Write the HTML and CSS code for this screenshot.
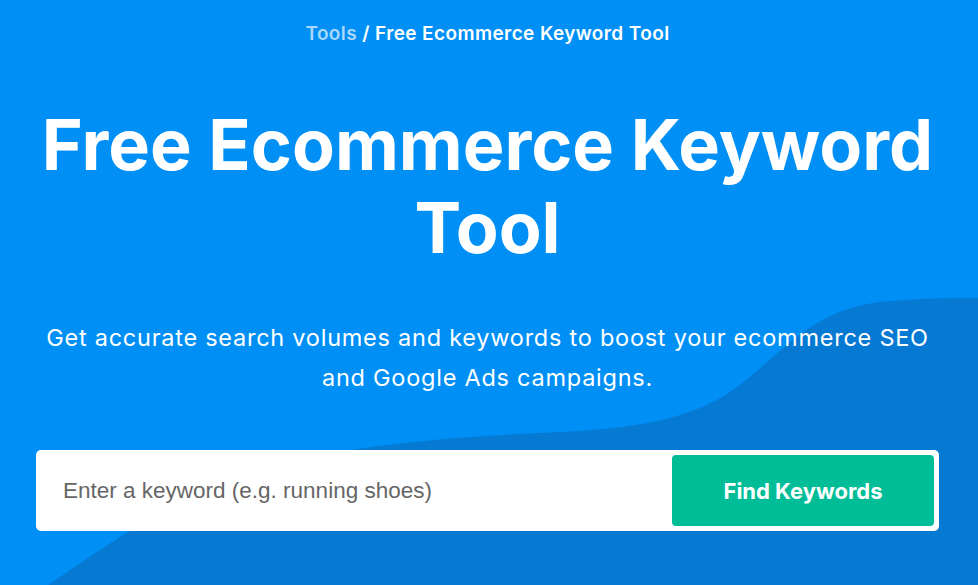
FILE: index.html
```html
<!DOCTYPE html>
<html lang="en">
<head>
<meta charset="utf-8">
<title>Free Ecommerce Keyword Tool</title>
<link rel="stylesheet" href="styles.css">
</head>
<body>
<section class="hero">
  <svg class="wave" viewBox="0 0 978 585" preserveAspectRatio="none" aria-hidden="true">
    <path d="M48 585 C 115 540, 195 480, 305 458 C 385 442, 470 436, 560 432 C 650 428, 700 415, 740 385 C 790 345, 815 310, 880 302 C 920 298, 950 298, 978 298 L 978 585 Z" fill="#0679d3"/>
  </svg>
  <div class="content">
    <nav class="crumbs"><a class="crumb-link" href="#">Tools</a> / Free Ecommerce Keyword Tool</nav>
    <h1 class="title">Free Ecommerce Keyword Tool</h1>
    <p class="lead">Get accurate search volumes and keywords to boost your ecommerce SEO and Google Ads campaigns.</p>
    <form class="search">
      <input class="search-input" type="text" placeholder="Enter a keyword (e.g. running shoes)">
      <button class="search-btn" type="button">Find Keywords</button>
    </form>
  </div>
</section>
</body>
</html>
```

FILE: styles.css
```css
* { box-sizing: border-box; }
html, body { margin: 0; padding: 0; }
body {
  font-family: Inter, "Noto Sans", sans-serif;
  background: #008ff5;
}
.hero {
  position: relative;
  width: 100%;
  height: 585px;
  background: #008ff5;
  overflow: hidden;
}
.wave {
  position: absolute;
  left: 0;
  top: 0;
  width: 100%;
  height: 100%;
}
.content {
  position: relative;
  display: flex;
  flex-direction: column;
  align-items: center;
  padding: 22px 39px 0 36px;
  color: #fff;
}
.crumbs {
  font-size: 19px;
  line-height: 24px;
  font-weight: 600;
  letter-spacing: 0.4px;
  color: #fff;
}
.crumb-link {
  color: #a9d8fc;
  text-decoration: none;
}
.title {
  margin: 57px 0 0 0;
  font-size: 70px;
  line-height: 83px;
  font-weight: 700;
  text-align: center;
  letter-spacing: 0px;
  width: 940px;
  flex-shrink: 0;
}
.lead {
  margin: 49px 0 0 0;
  font-size: 23.5px;
  line-height: 40px;
  font-weight: 400;
  letter-spacing: 0.75px;
  text-align: center;
  width: 100%;
}
.search {
  margin-top: 52px;
  width: 903px;
  height: 81px;
  background: #fff;
  border-radius: 5px;
  display: flex;
  align-items: stretch;
  padding: 5px 5px 5px 0;
}
.search-input {
  flex: 1;
  border: none;
  outline: none;
  background: transparent;
  padding: 0 0 0 27px;
  font-family: "Liberation Sans", Arial, sans-serif;
  font-size: 22.5px;
  color: #333;
}
.search-input::placeholder { color: #666; }
.search-btn {
  width: 262px;
  border: none;
  border-radius: 4px;
  background: #00bd98;
  color: #fff;
  font-family: Inter, "Noto Sans", sans-serif;
  font-size: 22px;
  font-weight: 700;
  cursor: pointer;
}
```
